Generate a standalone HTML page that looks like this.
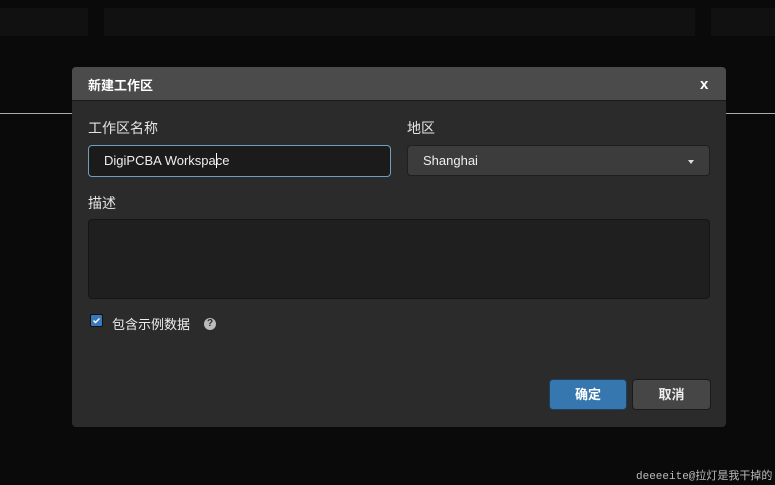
<!DOCTYPE html>
<html><head><meta charset="utf-8"><style>
body{margin:0;width:775px;height:485px;background:#0a0a0a;position:relative;overflow:hidden;font-family:"Liberation Sans","Noto Sans CJK SC",sans-serif;color:#e8e8e8}
.a{position:absolute}
.bar{background:#111;top:8px;height:28px}
.dlg{left:72px;top:67px;width:654px;height:360px;background:#2b2b2b;border-radius:4px;overflow:hidden}
.hd{left:0;top:0;width:654px;height:33px;background:#4b4b4b;border-bottom:1px solid #1a1a1a}
.lbl{font-size:14px;color:#e4e4e4}
.in{border-radius:4px;box-sizing:border-box}
.btn{border-radius:4px;font-size:13px;font-weight:bold;text-align:center;line-height:30px;box-sizing:border-box}
</style></head><body>
<div class="a bar" style="left:0;width:88px"></div>
<div class="a bar" style="left:104px;width:591px"></div>
<div class="a bar" style="left:711px;width:64px"></div>
<div class="a" style="left:0;top:113px;width:775px;height:1px;background:#aaa"></div>
<div class="a dlg">
 <div class="a hd"></div>
 <div class="a" style="left:16px;top:8px;font-size:13px;font-weight:bold;color:#fff">新建工作区</div>
 <div class="a" style="left:628px;top:9px;font-size:15px;font-weight:bold;color:#fff">x</div>
 <div class="a lbl" style="left:16px;top:51px">工作区名称</div>
 <div class="a lbl" style="left:335px;top:51px">地区</div>
 <div class="a in" style="left:16px;top:78px;width:303px;height:32px;background:#1b1b1b;border:1px solid #6f9fbd;font-size:13px;padding:7px 0 0 15px;color:#eee">DigiPCBA Workspa<span style="border-left:1px solid #fff;margin:0 -1px 0 0"></span>ce</div>
 <div class="a in" style="left:335px;top:78px;width:303px;height:31px;background:#3c3c3c;border:1px solid #1f1f1f;font-size:13px;padding:7px 0 0 15px;color:#eee">Shanghai</div>
 <div class="a" style="left:616px;top:93px;width:0;height:0;border-left:3px solid transparent;border-right:3px solid transparent;border-top:4px solid #ddd"></div>
 <div class="a lbl" style="left:16px;top:126px">描述</div>
 <div class="a in" style="left:16px;top:152px;width:622px;height:80px;background:#1f1f1f;border:1px solid #151515"></div>
 <div class="a" style="left:18px;top:247px;width:13px;height:13px;background:#3b78b8;border:1px solid #111;border-radius:2px;box-sizing:border-box"></div>
 <svg class="a" style="left:18px;top:247px" width="13" height="13"><path d="M3.5 6.5l2 2 4-4" stroke="#fff" stroke-width="1.4" fill="none"/></svg>
 <div class="a" style="left:40px;top:247px;font-size:13px;color:#eee">包含示例数据</div>
 <div class="a" style="left:132px;top:251px;width:12px;height:12px;border-radius:50%;background:#bbb;color:#2b2b2b;font-size:10px;font-weight:bold;text-align:center;line-height:12px">?</div>
 <div class="a btn" style="left:477px;top:312px;width:78px;height:31px;background:#3777b0;color:#fff;border:1px solid #1e3e5e">确定</div>
 <div class="a btn" style="left:560px;top:312px;width:79px;height:31px;background:#464646;color:#eee;border:1px solid #1a1a1a">取消</div>
</div>
<div class="a" style="left:636px;top:467px;font-size:11px;white-space:nowrap;color:#bbb;font-family:'Liberation Mono','Noto Sans CJK SC',monospace">deeeeite@拉灯是我干掉的</div>
</body></html>
